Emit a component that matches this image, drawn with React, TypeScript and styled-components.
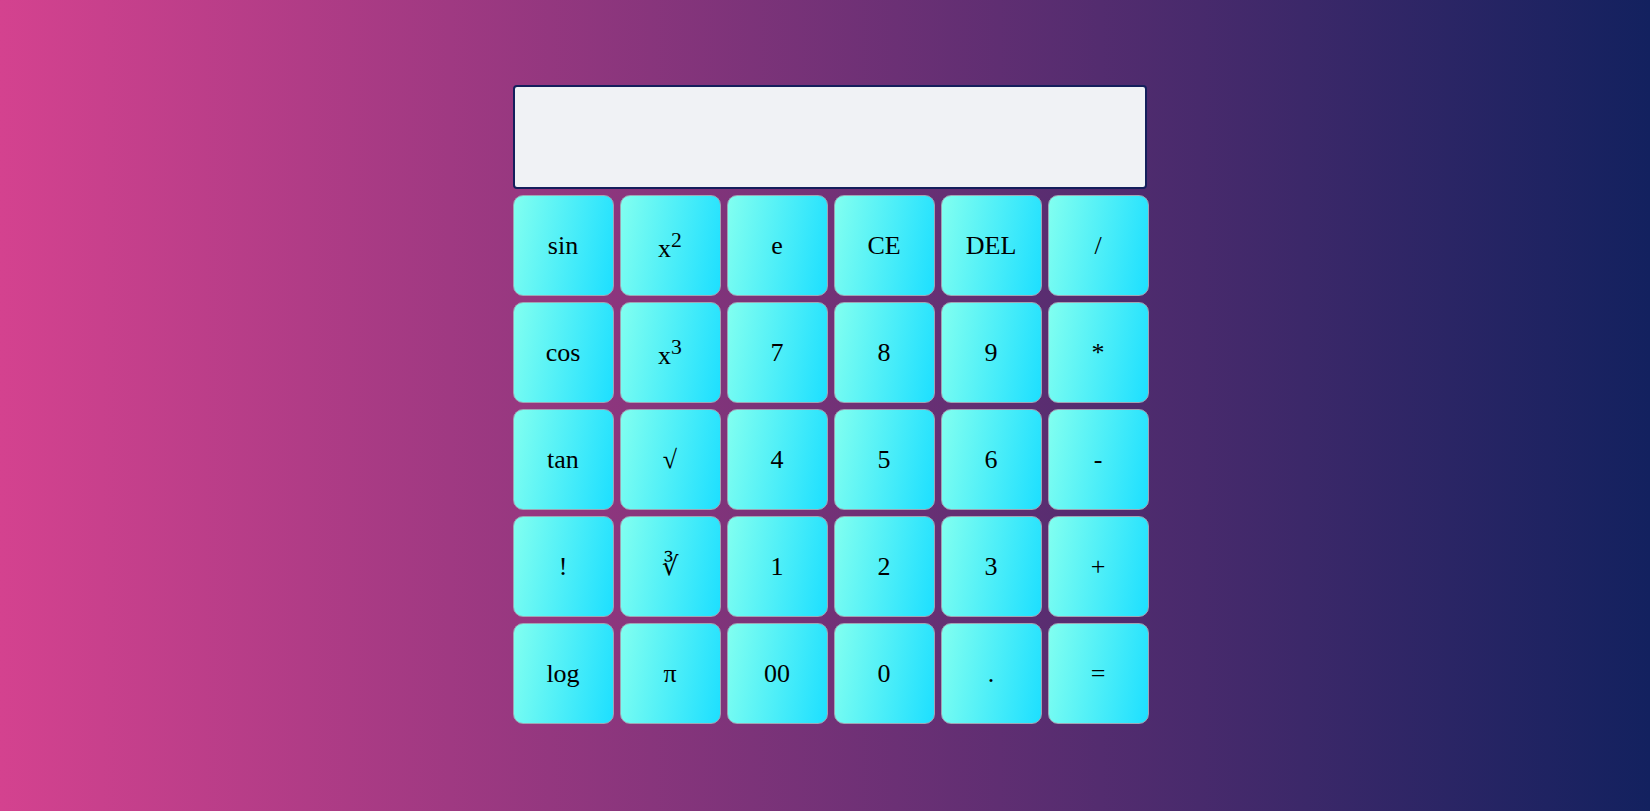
import styled, { createGlobalStyle } from "styled-components";

const GlobalStyle = createGlobalStyle`
  html, body {
    margin: 0;
    padding: 0;
  }
  body {
    font-family: "Liberation Serif", "Times New Roman", serif;
  }
`;

const Page = styled.div`
  min-height: 100vh;
  height: 811px;
  box-sizing: border-box;
  display: flex;
  justify-content: center;
  align-items: flex-start;
  padding: 85px 0 0 11px;
  background: linear-gradient(to right, #d4428f 0%, #13215f 100%);
`;

const Calculator = styled.div`
  width: 636px;
  display: flex;
  flex-direction: column;
  gap: 6px;
`;

const Display = styled.input`
  width: 634px;
  height: 104px;
  box-sizing: border-box;
  border: 2px solid #141f5c;
  border-radius: 4px;
  background: #f0f2f5;
  font-family: "Liberation Serif", serif;
  font-size: 32px;
  text-align: right;
  padding: 0 12px;
  outline: none;
`;

const Keys = styled.div`
  display: grid;
  grid-template-columns: repeat(6, 101px);
  grid-auto-rows: 101px;
  gap: 6px;
`;

const Key = styled.button`
  box-sizing: border-box;
  border: 1px solid #a0a4b4;
  border-radius: 10px;
  background: linear-gradient(100deg, #82fff0 0%, #1ddfff 100%);
  color: #000;
  font-family: "Liberation Serif", "DejaVu Serif", "Times New Roman", serif;
  font-size: 26px;
  padding: 0;
  cursor: pointer;
  display: flex;
  align-items: center;
  justify-content: center;
`;

const keys: React.ReactNode[] = [
  "sin", <>x<sup>2</sup></>, "e", "CE", "DEL", "/",
  "cos", <>x<sup>3</sup></>, "7", "8", "9", "*",
  "tan", "√", "4", "5", "6", "-",
  "!", "∛", "1", "2", "3", "+",
  "log", "π", "00", "0", ".", "=",
];

const App: React.FC = () => {
  return (
    <>
      <GlobalStyle />
      <Page>
        <Calculator>
          <Display type="text" readOnly value="" />
          <Keys>
            {keys.map((k, i) => (
              <Key key={i}>
                <span>{k}</span>
              </Key>
            ))}
          </Keys>
        </Calculator>
      </Page>
    </>
  );
};

export default App;
